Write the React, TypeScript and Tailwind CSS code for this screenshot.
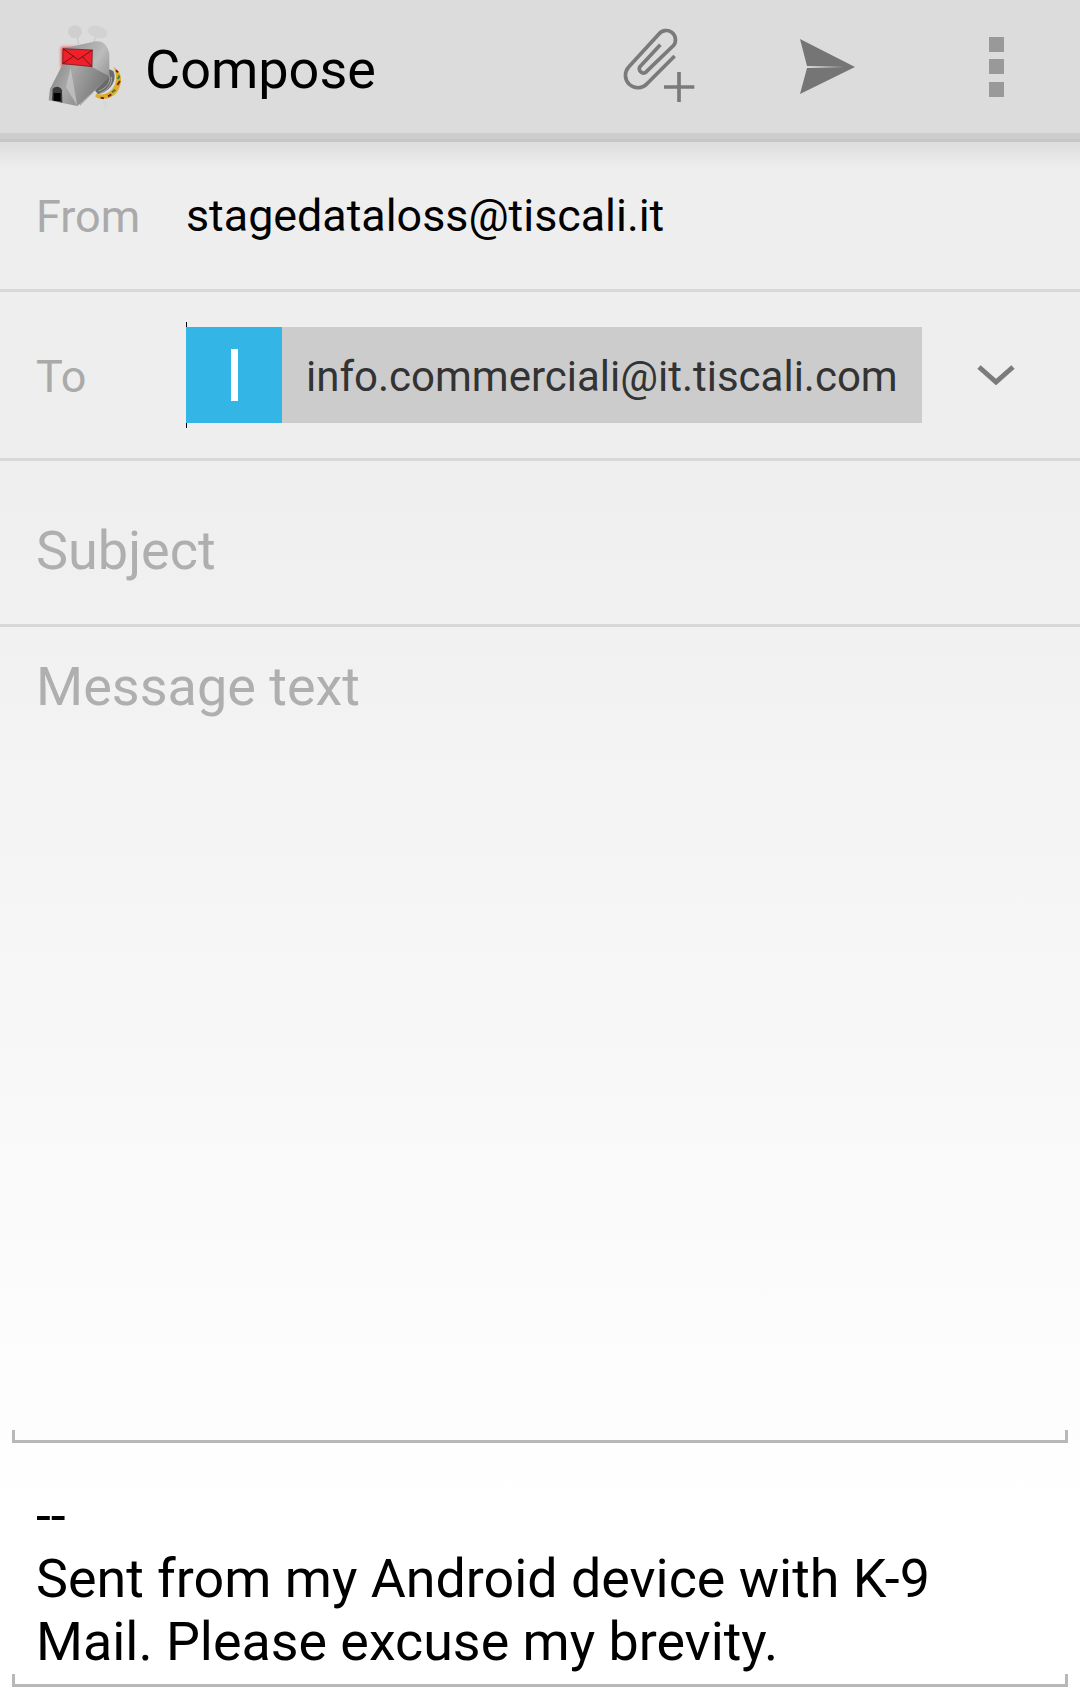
import React from 'react';

const K9Logo = () => (
  <svg width="110" height="110" viewBox="0 0 330 330">
    <defs>
      <linearGradient id="head" x1="0" y1="0" x2="1" y2="0.9">
        <stop offset="0" stopColor="#8f8f8f" />
        <stop offset="0.55" stopColor="#bcbcbc" />
        <stop offset="1" stopColor="#7c7c7c" />
      </linearGradient>
      <linearGradient id="snout" x1="0" y1="0" x2="1" y2="0.3">
        <stop offset="0" stopColor="#7f7f7f" />
        <stop offset="0.4" stopColor="#a8a8a8" />
        <stop offset="1" stopColor="#777777" />
      </linearGradient>
      <filter id="glow" x="-30%" y="-30%" width="160%" height="160%">
        <feGaussianBlur stdDeviation="5" />
      </filter>
    </defs>
    <path d="M142 78 L146 100 M196 80 L190 96" stroke="#c4c4c4" strokeWidth="3" />
    <ellipse cx="135" cy="62" rx="21" ry="19" fill="#cfcfcf" />
    <ellipse cx="203" cy="63" rx="30" ry="18" fill="#d2d2d2" transform="rotate(15 203 63)" />
    {/* collar */}
    <path d="M250 168 C276 178 280 216 262 242 C248 262 218 270 196 258 L198 248 C222 256 244 244 254 222 C262 204 258 184 250 168 Z" fill="#dcae2c" />
    <path d="M258 178 L264 184 M270 210 L262 222 M244 250 L234 256 M222 262 L212 260" stroke="#7a2020" strokeWidth="6" />
    <path d="M268 194 L264 204 M256 236 L246 244" stroke="#3f7a3a" strokeWidth="6" />
    <path d="M232 172 L250 180 C262 206 244 240 204 250 L190 232 Z" fill="#6a6a6a" />
    <path d="M238 192 C244 212 230 232 206 240 M244 198 C248 216 234 238 212 246" stroke="#a8a8a8" strokeWidth="3" fill="none" />
    <path d="M218 264 C232 268 236 284 228 296 C220 290 216 276 218 264 Z" fill="#d8d8d8" />
    {/* head */}
    <rect x="94" y="108" width="98" height="62" fill="#ff2020" filter="url(#glow)" opacity="0.85" />
    <path d="M104 112 L190 92 C216 86 232 100 238 128 L238 196 L150 284 L120 190 Z" fill="url(#head)" />
    <path d="M98 160 L60 234 L56 268 L142 285 L238 196 L186 168 Z" fill="url(#snout)" />
    <path d="M122 170 L108 228 L142 285 Z" fill="#c9c9c9" opacity="0.7" />
    <path d="M68 234 C76 224 92 226 96 238 L97 275 L66 268 Z" fill="#3a3a3a" />
    <rect x="71" y="246" width="21" height="24" fill="#000000" />
    <path d="M99 113 L187 117 L186 167 L98 158 Z" fill="#f0202a" stroke="#5a1010" strokeWidth="2" />
    <path d="M99 113 L144 146 L187 117 M98 158 L130 136 M186 167 L158 138" fill="none" stroke="#5a1010" strokeWidth="2.5" />
  </svg>
);

const AttachIcon = () => (
  <svg width="75" height="80" viewBox="130 85 225 240" fill="none" stroke="#7a7a7a" strokeWidth="11">
    <path d="M288 172 L205 255 A36 36 0 0 1 150 205 L240 107 A27 27 0 0 1 285 140 L200 222 A13 13 0 0 1 183 205 L245 138" />
    <path d="M301 220 V310 M256 265 H347" />
  </svg>
);

const SendIcon = () => (
  <svg width="56" height="56" viewBox="0 0 56 56">
    <path d="M0 0 L55 28 L0 55 L7 29 L44 28 L7 27 Z" fill="#757575" />
  </svg>
);

const OverflowIcon = () => (
  <div className="flex h-[60px] w-[15px] flex-col justify-between">
    <div className="h-[15px] bg-[#999999]"></div>
    <div className="h-[15px] bg-[#999999]"></div>
    <div className="h-[15px] bg-[#999999]"></div>
  </div>
);

const Separator = () => <div className="h-[3px] shrink-0 bg-[#d8d8d8]"></div>;

// small corner ticks of the holo edit text underline
const UnderlinedBox: React.FC<{ className?: string; children?: React.ReactNode }> = ({ className, children }) => (
  <div className={`relative mx-3 border-b-[3px] border-[#b8b8b8] ${className ?? ''}`}>
    <div className="absolute bottom-[-3px] left-0 h-[13px] w-[3px] bg-[#b8b8b8]"></div>
    <div className="absolute bottom-[-3px] right-0 h-[13px] w-[3px] bg-[#b8b8b8]"></div>
    {children}
  </div>
);

export default function App() {
  return (
    <div className="flex h-[1699px] w-[1080px] flex-col overflow-hidden bg-gradient-to-b from-[#eeeeee] from-25% to-[#ffffff] to-90% font-['Roboto',sans-serif]">
      <header className="relative flex h-[133px] shrink-0 items-center bg-[#dcdcdc]">
        <div className="ml-[30px] mt-[-2px] flex h-[110px] w-[110px] items-center justify-center">
          <K9Logo />
        </div>
        <h1 className="ml-[5px] mt-[6px] text-[54px] font-normal leading-none text-black">Compose</h1>
        <div className="ml-[246px] mt-[1px]">
          <AttachIcon />
        </div>
        <div className="ml-[103px] mt-[1px]">
          <SendIcon />
        </div>
        <div className="ml-[133px]">
          <OverflowIcon />
        </div>
        {/* action bar shadow */}
        <div className="absolute left-0 right-0 top-[133px] h-[6px] bg-[#cdcdcd]"></div>
        <div className="absolute left-0 right-0 top-[139px] h-[3px] bg-[#c6c6c6]"></div>
        <div className="absolute left-0 right-0 top-[142px] h-[26px] bg-gradient-to-b from-[#dddddd] to-transparent"></div>
      </header>

      <div className="flex h-[156px] shrink-0 items-center pt-[10px]">
        <span className="w-[150px] pl-[36px] text-[45px] leading-none text-[#aaaaaa]">From</span>
        <span className="ml-[36px] text-[44.8px] leading-none text-black">stagedataloss@tiscali.it</span>
      </div>
      <Separator />

      <div className="flex h-[166px] shrink-0 items-center">
        <span className="w-[186px] pl-[36px] pt-[3px] text-[45px] leading-none text-[#aaaaaa]">To</span>
        <div className="relative flex h-[96px] w-[736px] items-center bg-[#cccccc]">
          <div className="absolute left-0 top-[-5px] h-[5px] w-px bg-black"></div>
          <div className="absolute bottom-[-5px] left-0 h-[5px] w-px bg-black"></div>
          <div className="flex h-[96px] w-[96px] shrink-0 items-center justify-center bg-[#33b5e5]">
            <div className="h-[52px] w-[7px] bg-white"></div>
          </div>
          <span className="ml-6 whitespace-nowrap pt-[4px] text-[42px] leading-none text-[#333333]">info.commerciali@it.tiscali.com</span>
        </div>
        <svg className="ml-[55px]" width="38" height="20" viewBox="0 0 38 20" fill="none" stroke="#7b7b7b" strokeWidth="5">
          <path d="M2 2 L19 17 L36 2" />
        </svg>
      </div>
      <Separator />

      <div className="flex h-[163px] shrink-0 items-center pt-[17px]">
        <span className="pl-[36px] text-[54px] leading-none text-[#afafaf]">Subject</span>
      </div>
      <Separator />

      <div className="flex-1 pl-[36px] pt-[33px]">
        <span className="text-[54px] leading-none text-[#afafaf]">Message text</span>
      </div>

      <UnderlinedBox className="h-[1px]" />

      <div className="shrink-0">
        <UnderlinedBox className="mt-[41px] pb-[11px]">
          <p className="pl-[24px] pr-[60px] text-[53.8px] leading-[63px] text-black">
            --
            <br />
            Sent from my Android device with K-9 Mail. Please excuse my brevity.
          </p>
        </UnderlinedBox>
        <div className="h-[12px]"></div>
      </div>
    </div>
  );
}
